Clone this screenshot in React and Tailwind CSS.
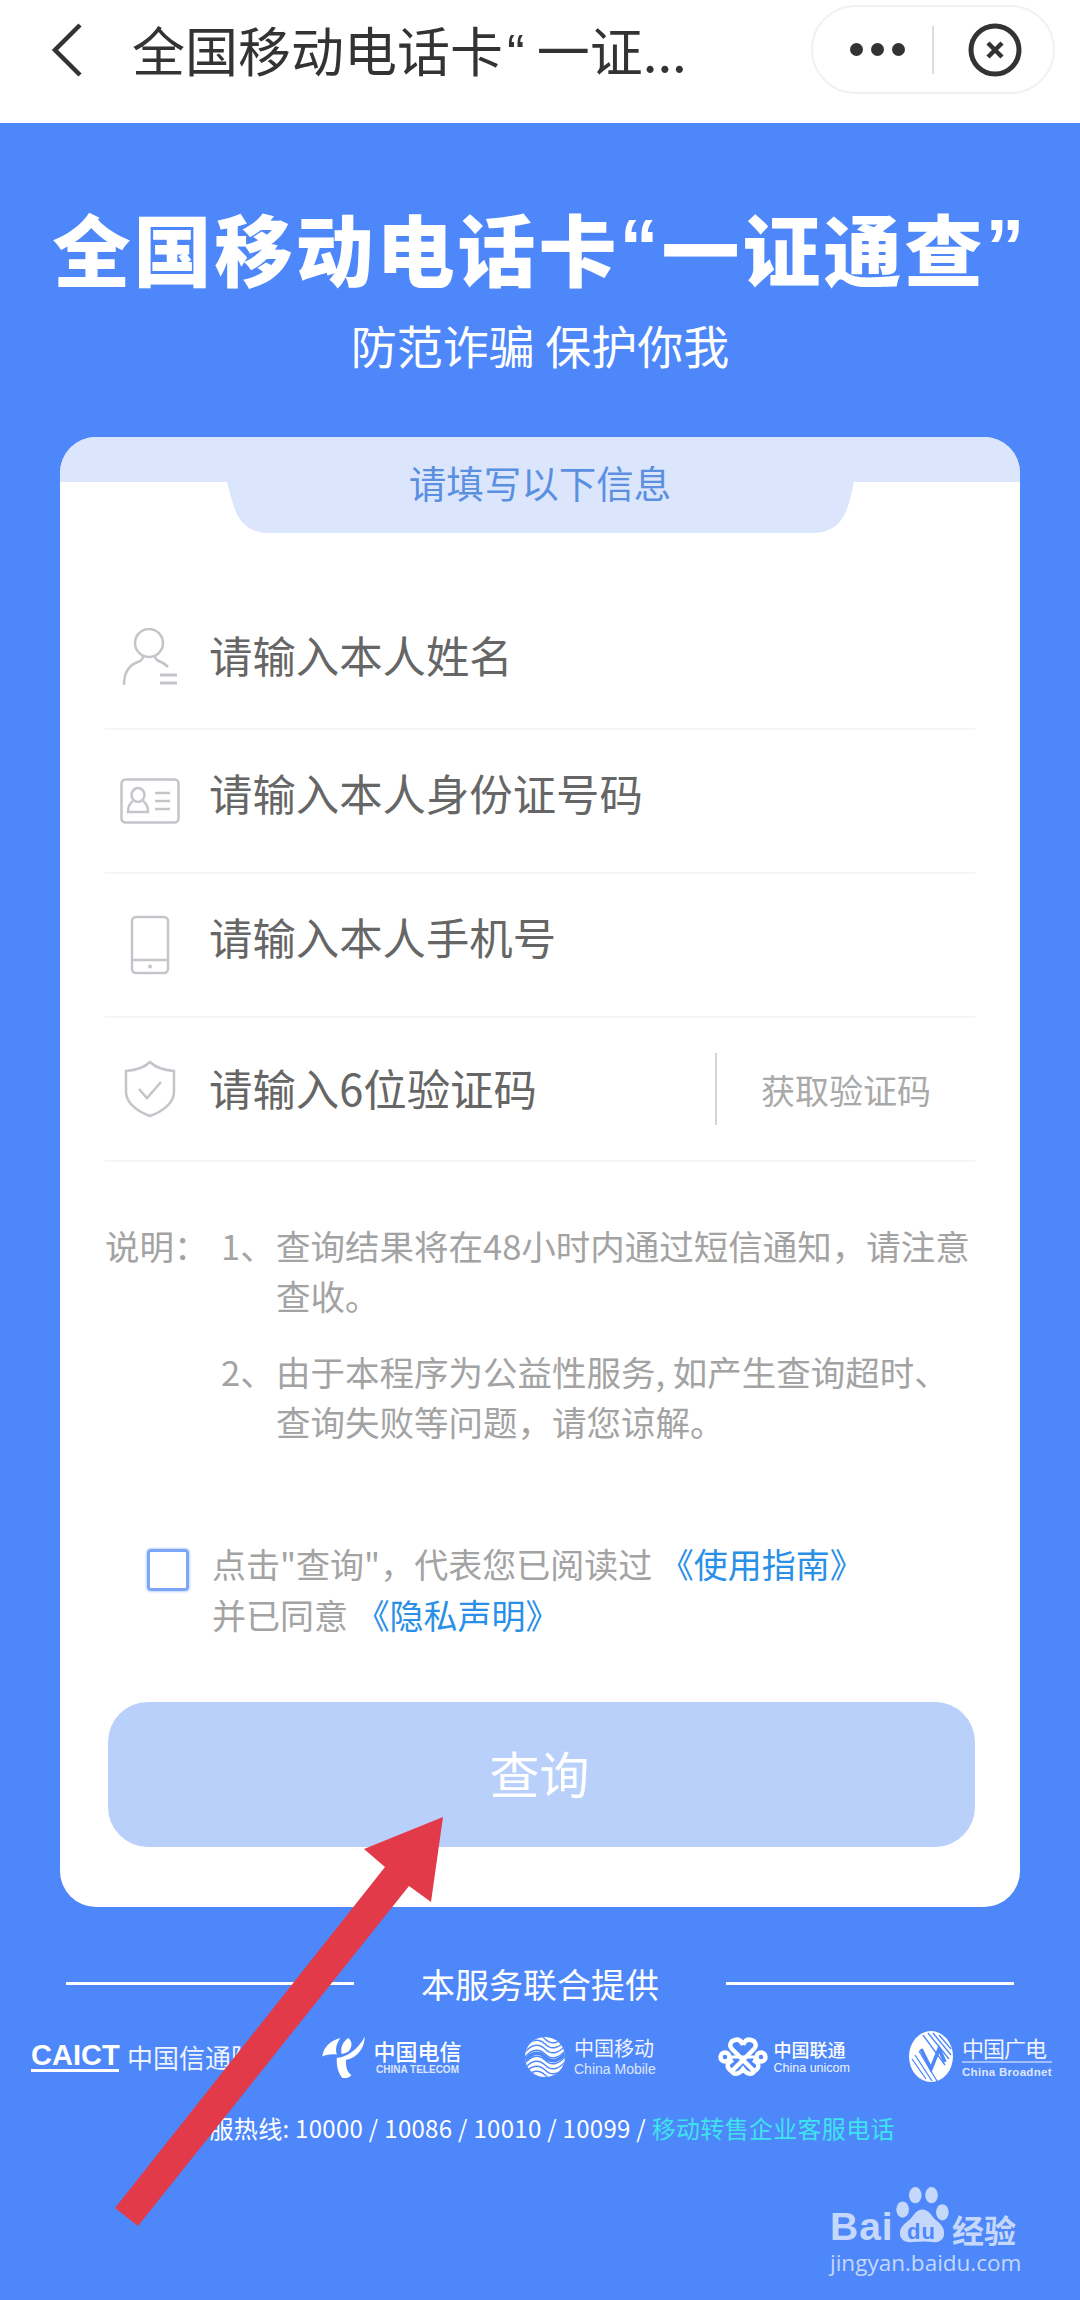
import React from "react";

const cjk = { fontFamily: '"Noto Sans CJK SC", "Noto Sans", sans-serif' };
const latin = { fontFamily: '"Liberation Sans", sans-serif' };

const PersonIcon = () => (
  <svg width="56" height="58" viewBox="0 0 56 58" fill="none" stroke="#c3c5ca" strokeWidth="2.5">
    <ellipse cx="27" cy="15" rx="14" ry="14" />
    <path d="M21 28c0 3-2 5-5 6C7 37 2 45 2 57" />
    <path d="M33 28c0 3 3 5 6 6 3 1 5 3 7 5" />
    <path d="M38 47h17M38 55h17" strokeWidth="3" />
  </svg>
);

const CardIcon = () => (
  <svg width="60" height="46" viewBox="0 0 60 46" fill="none" stroke="#c3c5ca" strokeWidth="2.5">
    <rect x="1.5" y="1.5" width="57" height="43" rx="4" />
    <ellipse cx="18" cy="17" rx="6.5" ry="7" />
    <path d="M13 23c-3 2-5 6-5 11h20c0-5-2-9-5-11" />
    <path d="M35 15h15M35 23h15M35 31h15" />
  </svg>
);

const PhoneIcon = () => (
  <svg width="40" height="60" viewBox="0 0 40 60" fill="none" stroke="#c3c5ca" strokeWidth="2.5">
    <rect x="2" y="2" width="36" height="56" rx="4" />
    <path d="M2 45h36" />
    <circle cx="20" cy="51.5" r="2" fill="#c3c5ca" stroke="none" />
  </svg>
);

const ShieldIcon = () => (
  <svg width="52" height="58" viewBox="0 0 52 58" fill="none" stroke="#c3c5ca" strokeWidth="2.5">
    <path d="M26 2c5 5 13 8 24 9v21c0 10-10 19-24 24C12 51 2 42 2 32V11c11-1 19-4 24-9z" />
    <path d="M15 29l8 9 14-16" />
  </svg>
);

const TelecomLogo = () => (
  <svg className="shrink-0" width="43" height="42" viewBox="0 0 128 127" fill="#fff">
    <path d="M0 62C3 35 22 14 55 6 44 20 38 38 44 56 30 54 12 56 0 62z" />
    <path d="M128 2c0 38-28 66-56 70-2 18 2 36 16 46-6 8-18 12-28 8C48 112 42 90 44 66c26 0 66-26 84-64z" />
    <path d="M78 6c12 8 14 24 2 40-10 6-16 8-22 8-4-20 4-36 20-48z" />
  </svg>
);

const mobileLines = [2, 7, 12, 17, 23, 28, 33, 38];

const MobileLogo = () => (
  <svg className="shrink-0" width="40" height="40" viewBox="0 0 40 40" fill="none">
    <defs>
      <clipPath id="mobileClip">
        <circle cx="20" cy="20" r="20" />
      </clipPath>
    </defs>
    <circle cx="20" cy="20" r="20" fill="#fff" />
    <g clipPath="url(#mobileClip)" stroke="#4d87fa" strokeWidth="1.4">
      {mobileLines.map((y) => (
        <path key={y} d={`M-4 ${y + 8}C6 ${y - 6} 14 ${y - 6} 20 ${y}S34 ${y + 6} 44 ${y - 8}`} />
      ))}
      <path d="M-4 28C6 14 14 14 20 20S34 26 44 12" strokeWidth="3.5" />
    </g>
  </svg>
);

const UnicomLogo = () => (
  <svg className="shrink-0" width="50" height="40" viewBox="0 0 50 40" fill="none" stroke="#fff" strokeWidth="4.5">
    <circle cx="7" cy="20" r="4.5" />
    <circle cx="43" cy="20" r="4.5" />
    <path d="M11 20h28" strokeWidth="3" />
    <path d="M25 8c-2-5-5-6-8-5-5 1-6 6-3 9l22 22c3-1 5-4 4-7-1-2-3-3-5-4" />
    <path d="M25 8c2-5 5-6 8-5 5 1 6 6 3 9L14 34c-3-1-5-4-4-7 1-2 3-3 5-4" />
    <path d="M14 34c1 3 6 5 11-2 5 7 10 5 11 2" />
  </svg>
);

const BroadnetLogo = () => (
  <svg className="shrink-0" width="44" height="51" viewBox="0 0 44 51" fill="none">
    <ellipse cx="22" cy="25.5" rx="22" ry="25.5" fill="#fff" />
    <path d="M19 2l21 26M24 2l18 22M14 4l22 30M30 4l12 14M6 24l17 26M3 28l14 20M10 20l18 30" stroke="#4d87fa" strokeWidth="1.3" />
    <path d="M12 18l10 20 8-20 6 13" stroke="#4d87fa" strokeWidth="3.5" />
  </svg>
);

const rows = [
  { icon: <PersonIcon />, text: "请输入本人姓名", textClass: "pb-[6px]" },
  { icon: <CardIcon />, text: "请输入本人身份证号码", textClass: "pb-[18px]" },
  { icon: <PhoneIcon />, text: "请输入本人手机号", textClass: "pb-[18px]" },
  { icon: <ShieldIcon />, text: "请输入6位验证码", textClass: "pb-[5px]", code: true },
];

const FormRow = ({ row }) => (
  <div className="flex h-[144px] items-center border-b-2 border-[#f4f5f6]">
    <div className="mr-[14px] flex w-[90px] justify-center">{row.icon}</div>
    <span className={`flex-1 text-[43.4px] leading-[56px] text-[#666666] ${row.textClass}`}>{row.text}</span>
    {row.code && (
      <div className="flex h-[72px] w-[260px] items-center border-l-2 border-[#d4d5d7] pl-[44px]">
        <span className="text-[34px] text-[#a9a9a9]">获取验证码</span>
      </div>
    )}
  </div>
);

const NoteItem = ({ num, children }) => (
  <div className="flex">
    <span className="w-[55px] shrink-0">{num}</span>
    <span className="flex-1">{children}</span>
  </div>
);

export default function App() {
  return (
    <div className="relative h-[2300px] w-[1080px] overflow-hidden bg-[#4d87fa]" style={cjk}>
      {/* Top bar */}
      <div className="flex h-[123px] items-start bg-white">
        <svg className="ml-[50px] mt-[23px]" width="34" height="54" viewBox="0 0 34 54" fill="none" stroke="#333" strokeWidth="4.5">
          <path d="M30 2L5 27l25 25" />
        </svg>
        <span className="ml-[48px] mt-[13px] w-[679px] whitespace-nowrap text-[53px] leading-[72px] text-[#333333]">
          全国移动电话卡<span className="pl-[4px] pr-[12px]" style={latin}>“</span>一证...
        </span>
        <div className="mt-[5px] flex h-[89px] w-[244px] items-center rounded-[45px] border-2 border-[#f1f1f1]">
          <div className="ml-[37px] flex gap-[8px]">
            <span className="h-[13px] w-[13px] rounded-full bg-[#333333]" />
            <span className="h-[13px] w-[13px] rounded-full bg-[#333333]" />
            <span className="h-[13px] w-[13px] rounded-full bg-[#333333]" />
          </div>
          <div className="ml-[27px] h-[48px] w-[2px] bg-[#dddddd]" />
          <svg className="ml-[34px]" width="54" height="54" viewBox="0 0 54 54" fill="none" stroke="#333" strokeWidth="5">
            <circle cx="27" cy="27" r="24" />
            <path d="M20 20l14 14M34 20L20 34" strokeWidth="4.5" />
          </svg>
        </div>
      </div>

      {/* Heading */}
      <h1 className="mt-[89px] flex h-[70px] items-center justify-center whitespace-nowrap text-[78px] font-black leading-none tracking-[3px] text-white">
        全国移动电话卡<span style={latin}>“</span>一证通查<span style={latin}>”</span>
      </h1>
      <p className="mt-[41px] h-[42px] text-center text-[46px] leading-[42px] text-white">防范诈骗 保护你我</p>

      {/* Form card */}
      <div className="mx-[60px] mt-[72px] overflow-hidden rounded-[36px] bg-white pb-[60px]">
        <div className="relative h-[96px]">
          <div className="h-[45px] bg-[#dbe6fd]" />
          <svg className="mx-auto block" width="627" height="51" viewBox="0 0 627 51" fill="#dbe6fd">
            <path d="M0 0h627c-6 26-9 51-43 51H43C10 51 7 26 0 0z" />
          </svg>
          <span className="absolute inset-x-0 top-[20px] text-center text-[37.5px] leading-[50px] text-[#5b8fe0]">请填写以下信息</span>
        </div>

        <div className="mx-[45px] mt-[53px]">
          {rows.map((row) => (
            <FormRow key={row.text} row={row} />
          ))}

          {/* Notes */}
          <div className="mt-[58px] flex text-[34.5px] leading-[50px] text-[#a3a3a3]">
            <span className="w-[116px] shrink-0">说明：</span>
            <div className="flex flex-1 flex-col gap-[26px]">
              <NoteItem num="1、">
                查询结果将在48小时内通过短信通知，请注意
                <br />
                查收。
              </NoteItem>
              <NoteItem num="2、">
                由于本程序为公益性服务, 如产生查询超时、
                <br />
                查询失败等问题，请您谅解。
              </NoteItem>
            </div>
          </div>

          {/* Agreement */}
          <div className="mt-[92px] flex pl-[42px] text-[34px] leading-[51px] text-[#a3a3a3]">
            <span className="mr-[23px] mt-[11px] h-[42px] w-[42px] shrink-0 rounded-[4px] border-[3px] border-[#7ea6f8] shadow-[0_0_3px_#7ea6f8]" />
            <div>
              <p>
                点击"查询"，代表您已阅读过 <span className="text-[#2a8fe6]">《使用指南》</span>
              </p>
              <p>
                并已同意 <span className="text-[#2a8fe6]">《隐私声明》</span>
              </p>
            </div>
          </div>

          <button className="ml-[3px] mt-[62px] flex h-[145px] w-[867px] items-center justify-center rounded-[40px] bg-[#b9d0fb] pb-[5px] pr-[4px] text-[50px] text-white">
            查询
          </button>
        </div>
      </div>

      {/* Footer */}
      <div className="mt-[52px] flex h-[48px] items-center justify-between px-[66px]">
        <span className="h-[3px] w-[288px] bg-white" />
        <span className="text-[34px] text-white">本服务联合提供</span>
        <span className="h-[3px] w-[288px] bg-white" />
      </div>

      <div className="mt-[24px] flex h-[51px] items-center justify-between px-[31px] text-white">
        <div className="flex w-[228px] items-center">
          <div className="w-[88px] border-b-[3px] border-white text-[29px] font-bold leading-[28px]" style={latin}>CAICT</div>
          <span className="ml-[8px] whitespace-nowrap text-[26px] leading-none opacity-90">中国信通院</span>
        </div>
        <div className="flex w-[141px] items-center gap-[9px]">
          <TelecomLogo />
          <div className="flex flex-col items-center">
            <span className="whitespace-nowrap text-[22px] font-medium leading-[26px]">中国电信</span>
            <span className="whitespace-nowrap text-[10px] font-bold leading-[14px] opacity-80" style={latin}>CHINA TELECOM</span>
          </div>
        </div>
        <div className="flex w-[130px] items-center gap-[9px]">
          <MobileLogo />
          <div className="flex flex-col">
            <span className="whitespace-nowrap text-[20px] leading-[24px] opacity-90">中国移动</span>
            <span className="whitespace-nowrap text-[14px] leading-[18px] opacity-80" style={latin}>China Mobile</span>
          </div>
        </div>
        <div className="flex w-[129px] items-center gap-[6px]">
          <UnicomLogo />
          <div className="flex flex-col">
            <span className="whitespace-nowrap text-[18px] font-medium leading-[22px]">中国联通</span>
            <span className="whitespace-nowrap text-[12.5px] leading-[16px] opacity-90" style={latin}>China unicom</span>
          </div>
        </div>
        <div className="flex w-[140px] items-center gap-[9px]">
          <BroadnetLogo />
          <div className="flex flex-col">
            <span className="whitespace-nowrap border-b-2 border-[#a9c6fb] text-[22px] leading-[28px] tracking-[-1px] opacity-90">中国广电</span>
            <span className="whitespace-nowrap text-[11.5px] font-bold leading-[18px] tracking-[0.3px] opacity-80" style={latin}>China Broadnet</span>
          </div>
        </div>
      </div>

      <p className="mt-[29px] h-[34px] whitespace-nowrap text-center text-[24px] leading-[34px] tracking-[0.3px] text-white">
        客服热线: 10000 / 10086 / 10010 / 10099 / <span className="text-[#3fe3ee]">移动转售企业客服电话</span>
      </p>

      {/* Annotation arrow */}
      <svg className="pointer-events-none absolute left-0 top-0" width="1080" height="2300" viewBox="0 0 1080 2300" fill="#e23a48">
        <path d="M443 1817L364 1849 385 1867 115 2208 138 2226 409 1886 431 1902z" />
      </svg>

      {/* Watermark */}
      <div className="absolute left-[830px] top-[2180px] h-[100px] w-[195px] text-[#c5d8fb]">
        <span className="absolute left-0 top-[24px] text-[39px] font-bold leading-[46px] tracking-[1px]" style={latin}>Bai</span>
        <svg className="absolute left-[65px] top-[7px]" width="55" height="56" viewBox="7 5 58 62" fill="#c5d8fb">
          <ellipse cx="14" cy="30" rx="7" ry="9" />
          <ellipse cx="28" cy="14" rx="7" ry="9" />
          <ellipse cx="46" cy="14" rx="7" ry="9" />
          <ellipse cx="58" cy="33" rx="7" ry="9" />
          <path d="M36 30c7 0 9 6 14 11 5 4 10 8 10 15 0 9-8 11-13 10-6-1-14-1-21 0-7 1-15-1-15-10 0-7 6-11 11-15 5-5 7-11 14-11z" />
        </svg>
        <span className="absolute left-[77px] top-[40px] text-[22px] font-bold leading-[24px] tracking-[1px] text-[#4d87fa]" style={latin}>du</span>
        <span className="absolute left-[122px] top-[29px] whitespace-nowrap text-[32px] font-bold leading-[40px]">经验</span>
        <span className="absolute left-0 top-[66px] whitespace-nowrap text-[22.5px] leading-[34px]" style={{ fontFamily: '"Open Sans", sans-serif' }}>jingyan.baidu.com</span>
      </div>
    </div>
  );
}
